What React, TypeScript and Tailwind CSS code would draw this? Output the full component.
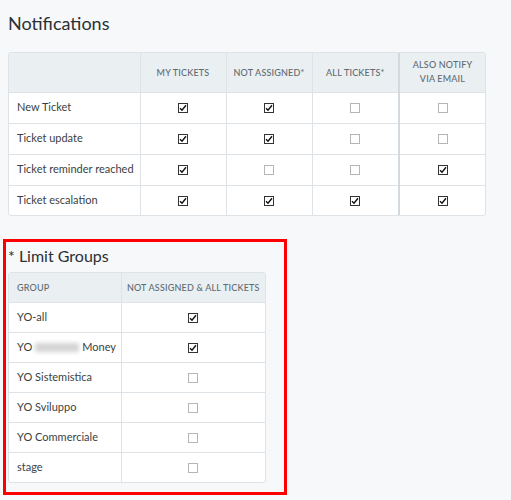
import React from 'react';

const font = { fontFamily: '"Lato", "Noto Sans", sans-serif' };

function Box({ checked }: { checked: boolean }) {
  return (
    <span
      className={`inline-flex w-[10px] h-[10px] items-center justify-center border align-middle ${
        checked ? 'border-[#333] bg-white' : 'border-[#b5b5b5] bg-white'
      }`}
    >
      {checked && (
        <svg width="8" height="8" viewBox="0 0 8 8">
          <path d="M1 4.2 L3 6.3 L7 1.2" fill="none" stroke="#111" strokeWidth="1.4" />
        </svg>
      )}
    </span>
  );
}

const notifications = [
  { label: 'New Ticket', v: [true, true, false, false] },
  { label: 'Ticket update', v: [true, true, false, false] },
  { label: 'Ticket reminder reached', v: [true, false, false, true] },
  { label: 'Ticket escalation', v: [true, true, true, true] },
];

const groups = [
  { name: 'YO-all', checked: true },
  { name: 'YO Money', checked: true, blurred: true },
  { name: 'YO Sistemistica', checked: false },
  { name: 'YO Sviluppo', checked: false },
  { name: 'YO Commerciale', checked: false },
  { name: 'stage', checked: false },
];

export default function App() {
  return (
    <div className="w-[511px] h-[500px] bg-[#f6f8fa] text-[#3b3f42] overflow-hidden" style={font}>
      {/* Notifications */}
      <div className="pl-2 pt-[11px]">
        <h1 className="text-[18px] leading-[25px] text-[#2c3034]">Notifications</h1>
        <div className="mt-4 w-[478px] border border-[#dde3e7] rounded-[3px] overflow-hidden bg-white">
          <table className="w-full table-fixed border-collapse text-[11px] whitespace-nowrap">
            <colgroup>
              <col className="w-[131px]" />
              <col className="w-[86px]" />
              <col className="w-[86px]" />
              <col className="w-[87px]" />
              <col />
            </colgroup>
            <thead>
              <tr className="h-[39px] bg-[#eaeff2] text-[9px] tracking-[0.02em] text-[#5f6b73] uppercase">
                <th></th>
                <th className="border-l border-[#dde3e7] font-medium">My tickets</th>
                <th className="border-l border-[#dde3e7] font-medium">Not assigned*</th>
                <th className="border-l border-[#dde3e7] font-medium">All tickets*</th>
                <th className="border-l-2 border-[#d2dadf] font-medium leading-[14px]">
                  Also notify
                  <br />
                  via email
                </th>
              </tr>
            </thead>
            <tbody>
              {notifications.map((n, i) => (
                <tr key={n.label} className={`${i === 3 ? 'h-[30px]' : 'h-[31px]'} border-t border-[#dde3e7]`}>
                  <td className="pl-2 text-[#3b3f42]">{n.label}</td>
                  {n.v.map((c, j) => (
                    <td
                      key={j}
                      className={`text-center ${j === 3 ? 'border-l-2 border-[#d2dadf]' : 'border-l border-[#dde3e7]'}`}
                    >
                      <Box checked={c} />
                    </td>
                  ))}
                </tr>
              ))}
            </tbody>
          </table>
        </div>
      </div>

      {/* Limit Groups */}
      <div className="ml-[3px] mt-[23px] w-[284px] h-[256px] border-[3px] border-[#ff0000] pl-[2px]">
        <h2 className="text-[16px] leading-[22px] pt-[3px] text-[#2c3034]">* Limit Groups</h2>
        <div className="mt-[5px] w-[258px] border border-[#dde3e7] rounded-[3px] overflow-hidden bg-white">
          <table className="w-full table-fixed border-collapse text-[11px] whitespace-nowrap">
            <colgroup>
              <col className="w-[112px]" />
              <col />
            </colgroup>
            <thead>
              <tr className="h-[29px] bg-[#eaeff2] text-[9px] tracking-[0.02em] text-[#5f6b73] uppercase">
                <th className="text-left pl-2 font-medium">Group</th>
                <th className="border-l border-[#dde3e7] font-medium">Not assigned &amp; all tickets</th>
              </tr>
            </thead>
            <tbody>
              {groups.map((g) => (
                <tr key={g.name} className="h-[30px] border-t border-[#dde3e7]">
                  <td className="pl-2 text-[#3b3f42]">
                    {g.blurred ? (
                      <span className="inline-flex items-center">
                        YO
                        <span className="inline-block w-[44px] h-[9px] mx-[3px] bg-[#d4d4d4] blur-[2px]" />
                        Money
                      </span>
                    ) : (
                      g.name
                    )}
                  </td>
                  <td className="text-center border-l border-[#dde3e7]">
                    <Box checked={g.checked} />
                  </td>
                </tr>
              ))}
            </tbody>
          </table>
        </div>
      </div>
    </div>
  );
}
